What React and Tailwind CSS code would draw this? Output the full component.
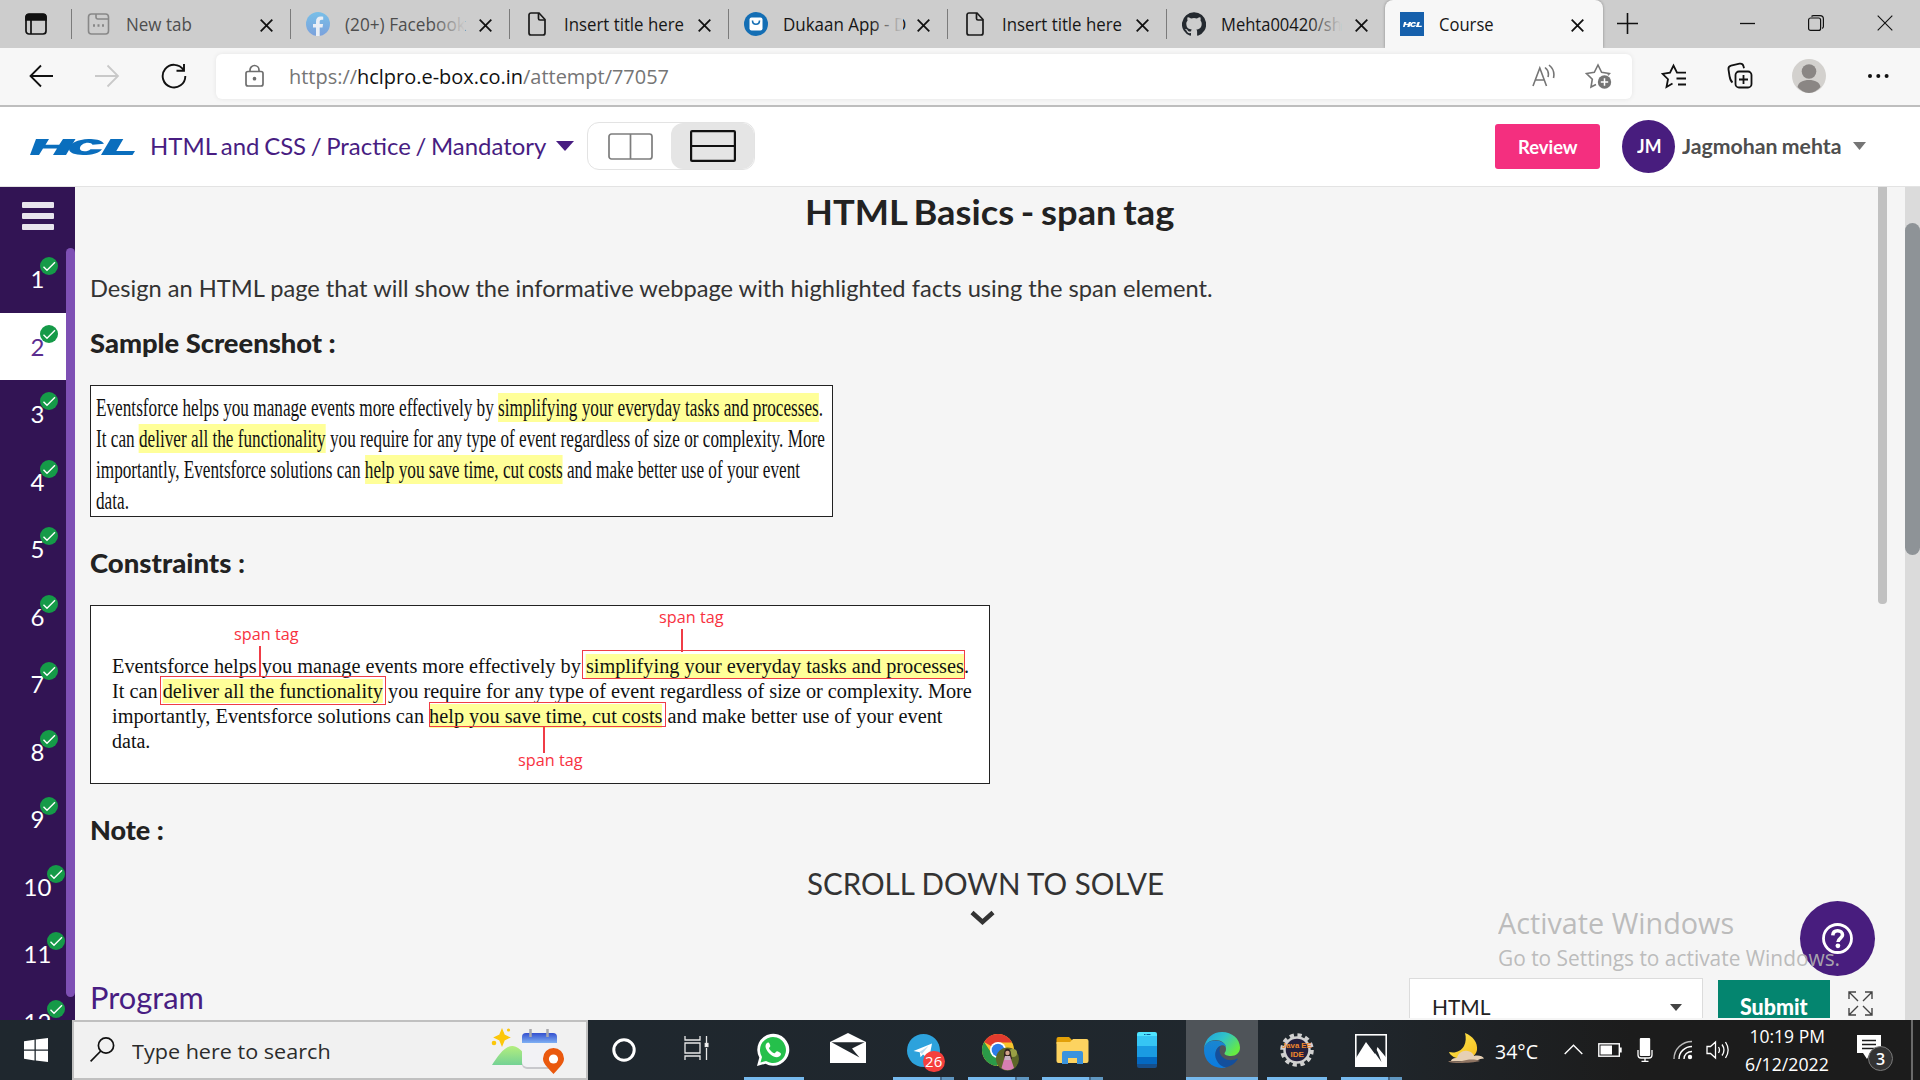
import { useLayoutEffect, useRef } from "react";

/* Single line of text squeezed or stretched to a given advance width. */
function Fit({ w, className = "", children }) {
  const ref = useRef(null);
  useLayoutEffect(() => {
    const el = ref.current;
    el.style.transform = `scaleX(${w / el.offsetWidth})`;
  }, [w]);
  return (
    <span className={`block shrink-0 whitespace-nowrap ${className}`} style={{ width: w }}>
      <span ref={ref} className="inline-block origin-left whitespace-pre">
        {children}
      </span>
    </span>
  );
}

const Svg = ({ w, h, className = "", children, ...rest }) => (
  <svg width={w} height={h} viewBox={`0 0 ${w} ${h}`} fill="none" className={`shrink-0 ${className}`} {...rest}>
    {children}
  </svg>
);

/* ---------- browser chrome ---------- */

const Cross = ({ s = 13, width = 1.8 }) => (
  <Svg w={s} h={s} stroke="#111" strokeWidth={width}>
    <path d={`M.7 .7 L${s - 0.7} ${s - 0.7} M${s - 0.7} .7 L.7 ${s - 0.7}`} />
  </Svg>
);

const PageIcon = () => (
  <Svg w={24} h={24} stroke="#1a1a1a" strokeWidth="1.7">
    <path d="M6 1h8l6 6.5V21a2 2 0 0 1-2 2H6a2 2 0 0 1-2-2V3a2 2 0 0 1 2-2Z" />
    <path d="M13.5 1v5.5a1.5 1.5 0 0 0 1.5 1.5h5" />
  </Svg>
);
const NewTabIcon = () => (
  <Svg w={24} h={24} stroke="#888" strokeWidth="1.6">
    <rect x="1.5" y="2" width="20" height="20" rx="3" />
    <path d="M9 2v3a2 2 0 0 0 2 2h10" />
    <path d="M6 13.5h2M10.500 13.500h2M15 13.500h2" strokeWidth="2.4" />
  </Svg>
);
const FacebookIcon = () => (
  <Svg w={24} h={24}>
    <defs>
      <linearGradient id="fb" x1="0" y1="0" x2="0" y2="1">
        <stop offset="0" stopColor="#78bfe8" />
        <stop offset="1" stopColor="#7ba1dc" />
      </linearGradient>
    </defs>
    <circle cx="12" cy="12" r="12" fill="url(#fb)" />
    <path d="M10 24v-8.500H7V12h3V9.400C10 6.300 11.800 4.600 14.600 4.600c1.300 0 2.600.2 2.600.2v3h-1.500c-1.500 0-2 .9-2 1.900V12h3.400l-.6 3.500h-2.800V24Z" fill="#e9eef5" />
  </Svg>
);
const DukaanIcon = () => (
  <Svg w={24} h={24}>
    <circle cx="12" cy="12" r="12" fill="#146eb4" />
    <rect x="5.500" y="5.500" width="13" height="13" rx="2" fill="#fff" />
    <path d="M8.500 8.500c0 5 7 5 7 0" stroke="#146eb4" strokeWidth="1.600" />
  </Svg>
);
const GithubIcon = () => (
  <Svg w={24} h={24}>
    <path
      fill="#24292f"
      d="M12 .3a12 12 0 0 0-3.800 23.400c.6.1.8-.3.8-.6v-2c-3.300.7-4-1.600-4-1.600-.6-1.400-1.400-1.800-1.400-1.800-1-.7.1-.7.1-.7 1.200 0 1.900 1.200 1.900 1.200 1 1.800 2.800 1.300 3.500 1 0-.8.4-1.300.7-1.600-2.700-.3-5.500-1.300-5.500-6 0-1.200.5-2.300 1.300-3.100-.2-.4-.6-1.600 0-3.200 0 0 1-.3 3.400 1.200a11.500 11.500 0 0 1 6 0c2.300-1.500 3.300-1.200 3.300-1.200.7 1.600.3 2.800.2 3.200.8.8 1.200 1.900 1.200 3.200 0 4.600-2.800 5.600-5.500 5.900.5.400.9 1 .9 2.200v3.300c0 .3.1.7.8.6A12 12 0 0 0 12 .3"
    />
  </Svg>
);
const HclMark = ({ w, h, fill }) => (
  <svg width={w} height={h} viewBox="0 0 105 16" preserveAspectRatio="none" className="shrink-0" fill={fill}>
    <path d="M6 0h13l-3.500 5.800h13.700L33 0h12.500L36 16H23l4-6.500H13L9 16H0Z" />
    <path d="M74 4.800c-2-3.400-8-5-15.500-4.800C48 .3 39 4.500 39 9.800c0 4.200 6 6.200 14 6.200 9.500 0 16.500-2.200 19-5.800H60.500c-1.500 1.500-3.500 2-6 2-3.500 0-5-1.300-4.500-3.400.6-2.700 4-5 8-5 2.500 0 4 .7 4.500 2Z" />
    <path d="M80.500 0h12.800l-7 12H105l-2.500 4H71Z" />
  </svg>
);
const HclFavicon = () => (
  <span className="flex h-6 w-6 items-center justify-center bg-[#1660ac]">
    <HclMark w={19} h={5} fill="#fff" />
  </span>
);

const TABS = [
  { icon: <NewTabIcon />, label: "New tab", w: 66, dim: true },
  { icon: <FacebookIcon />, label: "(20+) Facebook", w: 121, dim: true, fade: true },
  { icon: <PageIcon />, label: "Insert title here", w: 120 },
  { icon: <DukaanIcon />, label: "Dukaan App - D", w: 123, fade: true },
  { icon: <PageIcon />, label: "Insert title here", w: 120 },
  { icon: <GithubIcon />, label: "Mehta00420/sh", w: 121, fade: true },
];

function TabBar() {
  return (
    <div className="flex h-12 w-full bg-[#cdcdcd]">
      <div className="flex w-[71px] shrink-0 items-center pl-[25px]">
        <Svg w={22} h={22} stroke="#111" strokeWidth="1.700">
          <rect x="1" y="1.500" width="20" height="19.500" rx="3" />
          <path d="M1 4a3 3 0 0 1 3-3h14a3 3 0 0 1 3 3v3H1Z" fill="#111" />
          <path d="M6 7v14" />
        </Svg>
      </div>
      {TABS.map((t, i) => (
        <div key={i} className="relative flex w-[219px] shrink-0 items-center">
          <div className="h-[30px] w-px bg-[#7b7b7b]" />
          <div className="ml-[15px] w-6 shrink-0">{t.icon}</div>
          <div className="ml-[15px] w-[124px]">
            <Fit w={t.w} className={`text-[17.500px] leading-[46px] ${t.dim ? "text-[#4d4d4d]" : "text-[#161616]"}`}>
              {t.label}
            </Fit>
          </div>
          {t.fade && <div className="absolute left-[142px] h-8 w-[33px] bg-gradient-to-r from-[#cdcdcd]/0 to-[#cdcdcd]" />}
          <div className="ml-[10px] pt-[2px]">
            <Cross />
          </div>
        </div>
      ))}
      <div className="flex w-[218px] shrink-0 items-center rounded-t-lg bg-[#f7f7f7] pl-[15px] shadow-[0_0_3px_rgba(0,0,0,0.35)] [clip-path:inset(0_-4px_0_-4px)]">
        <HclFavicon />
        <div className="ml-[15px] w-[130px]">
          <Fit w={55} className="text-[17.500px] leading-[46px] text-[#161616]">Course</Fit>
        </div>
        <div className="ml-[2px] pt-[2px]">
          <Cross />
        </div>
      </div>
      <div className="flex flex-1 items-center pl-[14px]">
        <Svg w={21} h={21} stroke="#111" strokeWidth="1.600" className="-mt-0.5">
          <path d="M10.500 0v21M0 10.500h21" />
        </Svg>
        <Svg w={15} h={16} stroke="#111" strokeWidth="1.300" className="-mt-0.5 ml-[102px]">
          <path d="M0 8.500h15" />
        </Svg>
        <Svg w={16} h={16} stroke="#111" strokeWidth="1.200" className="-mt-0.5 ml-[53px]">
          <rect x=".6" y="3" width="12" height="12.400" rx="2" />
          <path d="M3.500 1.500c.5-.6 1-.9 2-.9H12a3.400 3.400 0 0 1 3.400 3.400v7.500c0 .9-.4 1.300-1.200 1.900" />
        </Svg>
        <div className="-mt-0.5 ml-[53px]">
          <Cross s={16} width={1.1} />
        </div>
      </div>
    </div>
  );
}

function Toolbar() {
  return (
    <div className="flex h-[59px] w-full items-center border-b-2 border-[#bebebe] bg-[#f7f7f7] pb-px">
      <Svg w={25} h={24} stroke="#111" strokeWidth="1.800" className="ml-[29px]">
        <path d="M24 12H1.500M12 1.500 1.500 12 12 22.500" />
      </Svg>
      <Svg w={25} h={24} stroke="#c9c9c9" strokeWidth="1.800" className="ml-[41px]">
        <path d="M0 12h23M12.500 1.500 23 12 12.500 22.500" />
      </Svg>
      <Svg w={26} h={26} stroke="#111" strokeWidth="1.900" className="ml-[41px]">
        <path d="M22.500 7A11.300 11.300 0 1 0 24.300 13" />
        <path d="M23 1v6.800h-7.500" />
      </Svg>
      <div className="ml-[29px] flex h-[45px] w-[1416px] shrink-0 items-center rounded-md bg-white shadow-[0_0_5px_rgba(0,0,0,0.08)]">
        <Svg w={19} h={24} stroke="#6e6e6e" strokeWidth="1.700" className="ml-[29px]">
          <rect x="1" y="7.500" width="17" height="14.500" rx="2" />
          <path d="M5 7.500V6a4.500 4.500 0 0 1 9 0v1.500" />
          <circle cx="9.500" cy="14.700" r="1" fill="#6e6e6e" />
        </Svg>
        <Fit w={380} className="ml-[25px] text-[20px] leading-[45px] text-[#757575]">
          https://<span className="text-[#111]">hclpro.e-box.co.in</span>/attempt/77057
        </Fit>
        <Svg w={24} h={24} stroke="#757575" strokeWidth="1.600" className="ml-[863px]">
          <path d="M1 22 7.800 4 14.500 22M3.500 16h8.500" />
          <path d="M13 3.500a9 9 0 0 1 3 9.500M17 1a13 13 0 0 1 4.500 13" />
        </Svg>
        <Svg w={28} h={28} stroke="#757575" strokeWidth="1.600" className="ml-[29px]">
          <path d="M11 22.500 6 25l1.300-7.800L1.500 11.500l7.800-1.200L13 3l3.600 7.300 7.800 1.200-1.500 1.700" />
          <circle cx="19.500" cy="20" r="6.700" fill="#757575" stroke="none" />
          <path d="M19.500 16.300v7.400M15.800 20h7.400" stroke="#fff" strokeWidth="1.500" />
        </Svg>
      </div>
      <Svg w={26} h={26} stroke="#111" strokeWidth="1.800" className="ml-[29px]">
        <path d="M11.500 20.500 5.500 24 7 16.200 1.500 10.800l7.500-1.200L12.500 2.500 16 9.600h9M15.500 15.500h9.500M17 21.500h8" />
      </Svg>
      <Svg w={27} h={28} stroke="#111" strokeWidth="1.800" className="ml-[40px]">
        <rect x="8.500" y="9.500" width="16" height="16" rx="3.500" />
        <path d="M16.500 13v9M12 17.500h9" />
        <path d="M5.500 20.500C3.500 19 3 17 2.500 14L1.500 7.500c-.3-2 .6-3.300 2.500-3.800l8.500-2c2-.4 3.500.6 4 2.500l.5 2" />
      </Svg>
      <Svg w={34} h={34} className="ml-[38px]">
        <circle cx="17" cy="17" r="17" fill="#d3d1ce" />
        <circle cx="17" cy="12.500" r="7.300" fill="#8a8684" />
        <path d="M5.500 28c1-5 5.500-7 11.500-7s10.500 2 11.500 7A17 17 0 0 1 17 34a17 17 0 0 1-11.500-6Z" fill="#8a8684" />
      </Svg>
      <Svg w={21} h={4} fill="#111" className="ml-[42px]">
        <circle cx="2" cy="2" r="2" fill="#111" />
        <circle cx="10.300" cy="2" r="2" fill="#111" />
        <circle cx="18.600" cy="2" r="2" fill="#111" />
      </Svg>
    </div>
  );
}

/* ---------- course page ---------- */

function Header() {
  return (
    <div className="flex h-20 w-full items-center border-b border-[#e3e3e3] bg-white pb-px font-['Lato',sans-serif]">
      <div className="ml-[30px] mt-0.5">
        <HclMark w={105} h={16} fill="#0a6ebd" />
      </div>
      <Fit w={396} className="ml-[15px] text-[24px] leading-[78px] text-[#481d82] [word-spacing:-1.500px]">
        HTML and CSS / Practice / Mandatory
      </Fit>
      <Svg w={18} h={10} className="ml-[10px]">
        <path d="M0 0h18L9 10Z" fill="#481d82" />
      </Svg>
      <div className="ml-[13px] flex h-12 w-[168px] items-center rounded-xl border border-[#e3e3e3]">
        <Svg w={45} h={27} stroke="#7d7d7d" strokeWidth="1.700" className="ml-[20px]">
          <rect x="1" y="1" width="43" height="25" rx="2.500" />
          <path d="M22.500 1v25" />
        </Svg>
        <div className="ml-[18px] flex h-[46px] w-[83px] items-center justify-center rounded-xl bg-[#e5e5e5]">
          <Svg w={46} h={32} stroke="#111" strokeWidth="2.200">
            <rect x="1.100" y="1.100" width="43.800" height="29.800" rx="1" />
            <path d="M1 16h44" />
          </Svg>
        </div>
      </div>
      <div className="ml-[740px] flex h-[45px] w-[105px] items-center justify-center rounded-[3px] bg-[#f42f7f]">
        <Fit w={60} className="text-[19px] font-bold leading-[45px] text-white">Review</Fit>
      </div>
      <div className="ml-[22px] flex h-[53px] w-[53px] items-center justify-center rounded-full bg-[#481d7e]">
        <Fit w={24} className="text-[18.500px] font-bold leading-[45px] text-white">JM</Fit>
      </div>
      <Fit w={159} className="ml-[7px] text-[21px] font-bold leading-[78px] text-[#4e4e4e] [word-spacing:-1px]">
        Jagmohan mehta
      </Fit>
      <Svg w={13} h={8} className="ml-[12px]">
        <path d="M0 0h13L6.500 8Z" fill="#757575" />
      </Svg>
    </div>
  );
}

function Sidebar() {
  return (
    <div className="flex w-[75px] shrink-0 flex-col bg-[#321454] font-['Lato',sans-serif]">
      <div className="flex h-[58px] shrink-0 flex-col gap-[5px] pl-[22px] pt-[15px]">
        <div className="h-[6px] w-8 shrink-0 rounded-[1px] bg-[#e8e4ed]" />
        <div className="h-[6px] w-8 shrink-0 rounded-[1px] bg-[#e8e4ed]" />
        <div className="h-[6px] w-8 shrink-0 rounded-[1px] bg-[#e8e4ed]" />
      </div>
      <div className="flex min-h-0 flex-1">
        <div className="w-[66px] overflow-hidden">
          {[1, 2, 3, 4, 5, 6, 7, 8, 9, 10, 11, 12].map((n) => (
            <div
              key={n}
              className={`relative h-[67.550px] pl-[9px] pt-[20px] text-center text-[24px] leading-[28px] ${
                n === 2 ? "bg-white text-[#5b2d90]" : "text-white"
              }`}
            >
              {n}
              <Svg w={18} h={18} className={`absolute top-[12px] ${n > 9 ? "left-[47px]" : "left-[40px]"}`}>
                <circle cx="9" cy="9" r="9" fill="#159a48" />
                <path d="m3.500 9.700 3.500 3.500 8-8" stroke="#fff" strokeWidth="1.400" />
              </Svg>
            </div>
          ))}
        </div>
        <div className="mt-[3px] h-[749px] w-[9px] rounded-full bg-[#7e50b4]" />
      </div>
    </div>
  );
}

const Mark = ({ children }) => <span className="bg-[#ffff99] py-px">{children}</span>;

const Sample = ({ widths }) => (
  <>
    <Fit w={widths[0]}>
      Eventsforce helps you manage events more effectively by <Mark>simplifying your everyday tasks and processes</Mark>.
    </Fit>
    <Fit w={widths[1]}>
      It can <Mark>deliver all the functionality</Mark> you require for any type of event regardless of size or complexity. More
    </Fit>
    <Fit w={widths[2]}>
      importantly, Eventsforce solutions can <Mark>help you save time, cut costs</Mark> and make better use of your event
    </Fit>
    <Fit w={widths[3]}>data.</Fit>
  </>
);

const SpanTag = ({ className }) => (
  <div className={`absolute ${className}`}>
    <Fit w={65} className="font-['Open_Sans',sans-serif] text-[17px] leading-[22px] text-[#f8323f]">span tag</Fit>
  </div>
);

function Content() {
  return (
    <div className="flex min-w-0 flex-1 justify-between bg-[#f5f5f5] font-['Lato',sans-serif] text-[#222] [font-variant-ligatures:none]">
      <div className="flex w-[1800px] flex-col items-start pl-[15px]">
        <div className="mt-[2px] flex w-full pl-[715px]">
          <Fit w={369} className="text-[35px] font-bold leading-[44px] [word-spacing:-2px]">HTML Basics - span tag</Fit>
        </div>
        <Fit w={1123} className="mt-[39px] text-[24px] leading-[32px] text-[#333]">
          Design an HTML page that will show the informative webpage with highlighted facts using the span element.
        </Fit>
        <Fit w={246} className="mt-[21px] text-[27px] font-black leading-[36px]">Sample Screenshot :</Fit>
        <div className="mt-[24px] h-[132px] w-[743px] border border-[#222] bg-white pl-[5px] pt-[6px] font-['Liberation_Serif',serif] text-[25px] leading-[31px] text-[#111]">
          <Sample widths={[727, 729, 704, 33]} />
        </div>
        <Fit w={155} className="mt-[28px] text-[27px] font-black leading-[36px]">
          Constraints <span className="font-bold">:</span>
        </Fit>
        <div className="relative mt-[24px] h-[179px] w-[900px] border border-[#222] bg-white pl-[21px] pt-[48px] font-['Liberation_Serif',serif] text-[20px] leading-[25px] text-[#111]">
          <Sample widths={[857, 860, 831, 38]} />
          <SpanTag className="left-[143px] top-[17px]" />
          <SpanTag className="left-[568px] top-0" />
          <SpanTag className="left-[427px] top-[143px]" />
          <div className="absolute left-[168px] top-[40px] h-[31px] w-[1.500px] bg-[#f03c46]" />
          <div className="absolute left-[590px] top-[23px] h-[23px] w-[1.500px] bg-[#f03c46]" />
          <div className="absolute left-[452px] top-[121px] h-[26px] w-[1.500px] bg-[#f03c46]" />
          <div className="absolute left-[491px] top-[44px] h-[29px] w-[383px] border-[1.500px] border-[#f03c46]" />
          <div className="absolute left-[69px] top-[70px] h-[29px] w-[226px] border-[1.500px] border-[#f03c46]" />
          <div className="absolute left-[338px] top-[96px] h-[25px] w-[237px] border-[1.500px] border-[#f03c46]" />
        </div>
        <Fit w={74} className="mt-[28px] text-[27px] font-black leading-[36px]">Note :</Fit>
        <div className="mt-[15px] flex w-full flex-col pl-[717px]">
          <Fit w={357} className="text-[30px] leading-[40px] text-[#333]">SCROLL DOWN TO SOLVE</Fit>
          <Svg w={25} h={15} stroke="#333" strokeWidth="4.500" className="ml-[163px] mt-[7px]">
            <path d="M2 2.500 12.500 12 23 2.500" />
          </Svg>
        </div>
        <div className="mt-[52px] flex h-[41px] w-full overflow-hidden">
          <Fit w={114} className="text-[30px] leading-[40px] text-[#481d82]">Program</Fit>
          <div className="ml-[1205px] mt-px flex h-[60px] w-[294px] shrink-0 border border-[#dcdcdc] bg-white pl-[22px]">
            <Fit w={59} className="pt-[12px] text-[22px] leading-[32px]">HTML</Fit>
            <Svg w={12} h={7} className="ml-[179px] mt-[25px]">
              <path d="M0 0h12L6 7Z" fill="#444" />
            </Svg>
          </div>
          <div className="ml-[15px] mt-[3px] h-[60px] w-[112px] shrink-0 bg-[#04856f] pl-[22px]">
            <Fit w={68} className="pt-[11px] text-[22px] font-black leading-[32px] text-white">Submit</Fit>
          </div>
          <Svg w={25} h={25} stroke="#444" strokeWidth="1.400" className="ml-[18px] mt-[14px]">
            <path d="M10 10 1 1M1 8V1h7M15 10l9-9M17 1h7v7M10 15l-9 9M1 17v7h7M15 15l9 9M24 17v7h-7" />
          </Svg>
        </div>
      </div>
      <div className="flex w-[42px] shrink-0 justify-between">
        <div className="h-[417px] w-[9px] rounded-b bg-[#c1c1c1]" />
        <div className="w-[15px] bg-[#dbdbdb] pt-[36px]">
          <div className="h-[332px] rounded-full bg-[#8e9397]" />
        </div>
      </div>
    </div>
  );
}

/* ---------- taskbar ---------- */

function Whatsapp() {
  return (
    <Svg w={34} h={34} className="mr-[2px]">
      <path d="M1 33 3.300 24.500A16 16 0 1 1 9.500 30.700Z" fill="#fff" />
      <path d="M4.500 29.500 6 24A13 13 0 1 1 10 28Z" fill="#25c04b" />
      <path d="M12.500 9.500c-1-.3-3 1-3 3.700 0 4.500 6.500 11 11.500 11 2.500 0 4-1.700 4-3.400 0-.8-3.500-2.600-4.200-2.500-.8.200-1.600 2-2.300 2-1.500 0-5.500-3.800-5.500-5 0-.7 1.300-1.300 1.300-2.200 0-.8-1-3.400-1.800-3.600Z" fill="#fff" />
    </Svg>
  );
}
const Mail = () => (
  <Svg w={36} h={30} className="-mt-1">
    <path d="M18 0 36 9v21H0V9Z" fill="#fff" />
    <path d="M1.500 9.300h33L22 15.500l7.500 9L1.500 9.300Z" fill="#20272d" />
  </Svg>
);
const Telegram = () => (
  <div className="relative">
    <Svg w={33} h={33}>
      <circle cx="16.500" cy="16.500" r="16.500" fill="#2da2dc" />
      <path d="M6.500 17 25 9.500l-3 15.500-6-4.500-2.500 2.800-.7-5Z" fill="#fff" />
      <path d="m12.500 18 9-6-6.500 8Z" fill="#bcdcf0" />
    </Svg>
    <div className="absolute left-[16px] top-[17px] flex h-[21px] w-[22px] items-center justify-center rounded-full bg-[#f53f3c]">
      <Fit w={17} className="text-[15px] leading-[20px] text-white">26</Fit>
    </div>
  </div>
);
const Chrome = () => (
  <Svg w={38} h={38}>
    <circle cx="17" cy="17" r="16" fill="#f7c52d" />
    <path d="M17 17 3.100 9A16 16 0 0 1 31 9.500H17Z" fill="#e23b2e" />
    <path d="M3.100 9A16 16 0 0 0 16 33l7-12H11Z" fill="#2b9a48" />
    <circle cx="17" cy="17" r="8" fill="#fff" />
    <circle cx="17" cy="17" r="6.300" fill="#2d7de9" />
    <circle cx="26.500" cy="26" r="11.500" fill="#5d6628" />
    <circle cx="32" cy="20" r="4" fill="#9aa045" />
    <path d="M25 16c3-1 5 1 5 5l1 5h-8c0-4-.5-8 2-10Z" fill="#33251f" />
    <circle cx="26.500" cy="20" r="2.200" fill="#d3a48c" />
    <path d="M24 23h5l4 12c-4 3-9 3-12.500 0Z" fill="#d77fb0" />
    <path d="M24 23h5l.5 4h-6Z" fill="#c9b3c4" />
  </Svg>
);
const Explorer = () => (
  <Svg w={33} h={27}>
    <path d="M.5 2a2 2 0 0 1 2-2H13l3 3v4H.5Z" fill="#e2a008" />
    <path d="M.5 5H14l3-3h13.500a2 2 0 0 1 2 2v20a2 2 0 0 1-2 2h-28a2 2 0 0 1-2-2Z" fill="#fdd360" />
    <path d="M6 27V16a2 2 0 0 1 2-2h17a2 2 0 0 1 2 2v11h-6v-6h-9v6Z" fill="#3b93dc" />
  </Svg>
);
const Phone = () => (
  <Svg w={20} h={36}>
    <path d="M0 2a2 2 0 0 1 2-2h16a2 2 0 0 1 2 2v4H0Z" fill="#4fe4ff" />
    <path d="M0 4h20v10H0Z" fill="#36c5f4" />
    <path d="M0 14h20v11H0Z" fill="#1a9be2" />
    <path d="M0 25h20v7H0Z" fill="#0468c0" />
    <path d="M0 32h20v2a2 2 0 0 1-2 2H2a2 2 0 0 1-2-2Z" fill="#164f8c" />
    <path d="M7 2.500h1.500M9.500 2.500h4" stroke="#0c5a9a" />
  </Svg>
);
const Edge = () => (
  <Svg w={36} h={36}>
    <defs>
      <linearGradient id="e1" x1="0" y1="0" x2="1" y2=".6">
        <stop offset="0" stopColor="#1f9fe0" />
        <stop offset=".5" stopColor="#30c3c9" />
        <stop offset="1" stopColor="#66ea42" />
      </linearGradient>
      <linearGradient id="e2" x1="0" y1="0" x2="0" y2="1">
        <stop offset="0" stopColor="#1a86d0" />
        <stop offset="1" stopColor="#0a7be0" />
      </linearGradient>
    </defs>
    <path d="M0 17C1 6 9 0 18 0c10 0 18 7 18 15.500 0 5.500-4 8.500-9 8.500-4 0-6.500-1.300-6.500-2.500 0-1 1.500-1.500 1.500-4.500C22 11 17 8 11.500 8 5.500 8 1 12 0 17Z" fill="url(#e1)" />
    <path d="M0 18C0 12 5 8.500 11 8.500c6 0 11 3 11 6.500-1.500-1.500-3-2-5-1.500-3.500 1-6 5-5 10C13 29 17 33 22 35.500 10 38 0 29.500 0 18Z" fill="url(#e2)" />
    <path d="M17 13.700C12 16 9.500 22 12.500 28c2 4.500 5.500 7 10 7.300C27 34 31 31.500 33.500 27.500c.3-.8-.3-1.100-1-.7-8 4-17-1-17-8.500 0-2 .5-3.500 1.500-4.600Z" fill="#144f9c" />
  </Svg>
);
const JavaEE = () => (
  <div className="relative flex h-[34px] w-[34px] items-center justify-center">
    <Svg w={34} h={34}>
      <circle cx="17" cy="17" r="14.800" stroke="#d0d0d0" strokeWidth="4" strokeDasharray="4.200 3.550" />
      <circle cx="17" cy="17" r="12.500" fill="#25203c" stroke="#d0d0d0" strokeWidth="2.500" />
    </Svg>
    <div className="absolute left-[2px] top-[8px] font-['Liberation_Sans',sans-serif] text-[8px] font-bold leading-[9px] text-[#f0882c]">
      <Fit w={30} className="h-[9px]">Java EE</Fit>
      <Fit w={13} className="ml-[9px] h-[9px]">IDE</Fit>
    </div>
  </div>
);
const Photos = () => (
  <Svg w={32} h={33}>
    <rect x=".8" y=".8" width="30.400" height="31.400" stroke="#fff" strokeWidth="1.600" />
    <path d="M1 24 11 8l9 12 2.500-7 9 11v8H1Z" fill="#fff" />
    <path d="m18.500 17 8 11-3.500-9.500L21 14.500Z" fill="#20272d" />
  </Svg>
);
const TaskView = () => (
  <Svg w={25} h={24} stroke="#e8e8e8" strokeWidth="1.300" className="mr-[6px] -mt-1">
    <path d="M1 0v4h15V0M1 24v-4h15v4M1 7h15v10H1ZM22.500 0v7M22.500 12v12" />
    <rect x="21.300" y="7.500" width="2.600" height="3" fill="#fff" />
  </Svg>
);

const APPS = [
  { icon: <Svg w={24} h={24}><circle cx="12" cy="12" r="10.200" stroke="#fff" strokeWidth="3" /></Svg> },
  { icon: <TaskView /> },
  { icon: <Whatsapp />, bar: "full" },
  { icon: <Mail /> },
  { icon: <Telegram />, bar: "multi" },
  { icon: <div className="-mr-1 mt-1"><Chrome /></div>, bar: "multi" },
  { icon: <Explorer />, bar: "multi" },
  { icon: <Phone /> },
  { icon: <Edge />, active: true },
  { icon: <JavaEE />, bar: "full" },
  { icon: <Photos />, bar: "multi" },
];

function Taskbar() {
  return (
    <div className="flex h-[60px] w-full shrink-0 bg-gradient-to-r from-[#1f272e] from-30% via-[#20272d] via-70% to-[#1c1c1c] to-85% text-white">
      <div className="flex w-[72px] shrink-0 items-center pl-6">
        <Svg w={24} h={24} fill="#fff">
          <path d="M0 3.300 10.500 1.700v9.700H0ZM11.800 1.500 24 0v11.400H11.800ZM0 12.700h10.500v9.700L0 20.800ZM11.800 12.700H24V24l-12.200-1.600Z" fill="#fff" />
        </Svg>
      </div>
      <div className="flex w-[516px] shrink-0 items-center border-2 border-[#c0c0c0] bg-[#f1f1f1] pl-4">
        <Svg w={25} h={25} stroke="#111" strokeWidth="1.700" className="-mt-0.5">
          <circle cx="16" cy="8.500" r="7.600" />
          <path d="M10.800 14 .6 24.300" />
        </Svg>
        <Fit w={199} className="ml-[17px] pt-0.5 text-[20.500px] leading-[52px] text-[#2b2b2b]">Type here to search</Fit>
        <Svg w={76} h={48} className="ml-[159px]">
          <defs>
            <linearGradient id="hill" x1="0" y1="0" x2="0" y2="1">
              <stop offset="0" stopColor="#b4ee7d" />
              <stop offset="1" stopColor="#74d295" />
            </linearGradient>
            <linearGradient id="cal" x1="0" y1="0" x2="0" y2="1">
              <stop offset="0" stopColor="#3450cf" />
              <stop offset="1" stopColor="#7fb0f3" />
            </linearGradient>
          </defs>
          <path d="m12 4 2.200 5.300L19 11.500l-4.800 2.200L12 19l-2.200-5.300L5 11.500l4.800-2.200Z" fill="#fcc70a" stroke="#fcc70a" strokeWidth="1.500" />
          <circle cx="18.500" cy="4" r="1.600" fill="#fcc70a" />
          <circle cx="4" cy="17" r="2.300" fill="#fcc70a" />
          <path d="M2 39c5-8 13-20 21-19 8 1 13 11 20 19Z" fill="url(#hill)" />
          <rect x="32" y="8" width="35" height="35" rx="5" fill="#c8c8cc" />
          <rect x="32" y="7" width="35" height="34" rx="5" fill="#f2f2f5" />
          <path d="M32 17v-6a4 4 0 0 1 4-4h27a4 4 0 0 1 4 4v6Z" fill="url(#cal)" />
          <path d="M40.500 3v8M57.500 3v8" stroke="#a8a8ac" strokeWidth="2.500" />
          <path d="M63.500 48C56 40 53 37 53 32.500a10.500 10.500 0 0 1 21 0c0 4.500-3 7.500-10.500 15.500Z" fill="#ea590e" />
          <circle cx="63.500" cy="33" r="4.600" fill="#fff" />
        </Svg>
      </div>
      <div className="-ml-px flex w-[833px] shrink-0">
        {APPS.map((a, i) => (
          <div key={i} className="flex w-[74.700px] shrink-0 justify-center">
            <div className={`relative flex h-[60px] w-[72px] shrink-0 items-center justify-center ${a.active ? "bg-[#4f5459]" : ""}`}>
              {a.icon}
              {a.bar === "full" && <div className="absolute bottom-0 left-[6px] h-[3px] w-[60px] bg-[#76b9ed]" />}
              {a.active && <div className="absolute bottom-0 left-0 h-[3px] w-full bg-[#76b9ed]" />}
              {a.bar === "multi" && (
                <div className="absolute bottom-0 left-[6px] flex h-[3px] w-[61px]">
                  <div className="w-[47px] bg-[#76b9ed]" />
                  <div className="w-[2px] bg-[#45698a]" />
                  <div className="w-[12px] bg-[#5f96c0]" />
                </div>
              )}
            </div>
          </div>
        ))}
      </div>
      <div className="flex flex-1 items-center">
        <Svg w={36} h={32} className="-mt-1 ml-[28px]">
          <defs>
            <linearGradient id="moon" x1="0" y1="0" x2="1" y2="1">
              <stop offset="0" stopColor="#ffee55" />
              <stop offset="1" stopColor="#f5ba1c" />
            </linearGradient>
          </defs>
          <path d="M17 1c8 3 13 10 12 17-1.500 7-8 10-15 9C7 26.500 2 23.500 1 20c6 1.500 12-.5 15-6 2-4 2.200-8.500 1-13Z" fill="url(#moon)" />
          <path d="M3 29c0-2 3-3.500 6-3 1-5 6-8 10.500-7 4 .5 6 3 6.500 5 4-1 9 0 10 2.500-6 0-6 3-12 3.300Z" fill="#e6d0b4" />
          <path d="M0 29.500c4-1.500 9 1 14-.5s12-2.500 18 0c-8 2-27 3-32 .5Z" fill="#8e7462" />
        </Svg>
        <Fit w={43} className="ml-[11px] pt-1 text-[20px] leading-[56px]">34°C</Fit>
        <Svg w={19} h={11} stroke="#fff" strokeWidth="1.400" className="-mt-[22px] ml-[26px] translate-y-[10px]">
          <path d="m.7 10 8.800-8.700L18.300 10" />
        </Svg>
        <Svg w={24} h={14} className="ml-[15px]">
          <rect x=".8" y=".8" width="20.500" height="12.400" stroke="#fff" strokeWidth="1.400" />
          <path d="M2.500 2.500H14v9H2.500ZM22 4.500h1.700v5H22Z" fill="#fff" />
        </Svg>
        <Svg w={16} h={24} className="ml-[15px]">
          <rect x="2.800" y="0" width="10.400" height="18" rx="1" fill="#fff" />
          <path d="M1 12v5a3 3 0 0 0 3 3h8a3 3 0 0 0 3-3v-5M8 20v3M4.500 23.300h7" stroke="#fff" strokeWidth="1.300" />
        </Svg>
        <Svg w={20} h={20} stroke="#bbb" strokeWidth="1.400" className="ml-[20px]">
          <path d="M1 19C1 9 9 1.500 19 1.500" />
          <path d="M6 19C6 12 12 6.500 19 6.500M11 19c0-4.500 3.500-7.500 8-7.500" stroke="#fff" />
          <circle cx="17" cy="17" r="2.200" fill="#fff" stroke="none" />
        </Svg>
        <Svg w={23} h={20} stroke="#fff" strokeWidth="1.300" className="ml-[13px]">
          <path d="M1 6.500h3.500L9.500 2v16l-5-4.500H1ZM12.500 7c1.300 2 1.300 4 0 6M16 4.500c2.500 3.500 2.500 7.500 0 11M19.500 2c3.300 5 3.300 11 0 16" />
        </Svg>
        <div className="ml-[16px] flex w-[84px] shrink-0 flex-col items-center text-[17.500px] leading-[28px]">
          <Fit w={75} className="h-7">10:19 PM</Fit>
          <Fit w={84} className="h-7">6/12/2022</Fit>
        </div>
        <div className="relative ml-[28px] -mt-1">
          <Svg w={24} h={26}>
            <path d="M0 0h24v18H13l-3 6-4-6H0Z" fill="#fff" />
            <path d="M5 5.500h14M5 9.500h14M5 13.500h14" stroke="#1c1c1c" strokeWidth="1.300" />
          </Svg>
          <div className="absolute left-[11px] top-[11px] flex h-[25px] w-[25px] items-center justify-center rounded-full border border-[#7a7a7a] bg-[#333]">
            <span className="text-[16px] font-semibold leading-[22px]">3</span>
          </div>
        </div>
        <div className="ml-[30px] h-[60px] w-[2px] bg-[#6a6a6a]" />
      </div>
    </div>
  );
}

export default function App() {
  return (
    <div className="relative flex h-[1080px] w-[1920px] flex-col overflow-hidden bg-[#f5f5f5] font-['Open_Sans',sans-serif]">
      <TabBar />
      <Toolbar />
      <Header />
      <div className="flex h-[833px] shrink-0 overflow-hidden">
        <Sidebar />
        <Content />
      </div>
      <Taskbar />
      <div className="absolute left-[1800px] top-[901px] flex h-[75px] w-[75px] items-center justify-center rounded-full bg-[#481d7e]">
        <Svg w={31} h={31} stroke="#fff" strokeWidth="2.800">
          <circle cx="15.500" cy="15.500" r="14" />
          <path d="M10.800 12.300c.2-3 2.200-4.500 4.800-4.500 2.700 0 4.900 1.600 4.900 4.200 0 3.300-4.500 3.500-4.500 7" strokeWidth="3.600" />
          <circle cx="15.900" cy="22.800" r="2.400" fill="#fff" stroke="none" />
        </Svg>
      </div>
      <div className="absolute left-[1498px] top-[901px] text-[#b4b4b4]/90">
        <Fit w={236} className="text-[29.500px] leading-[44px]">Activate Windows</Fit>
        <Fit w={342} className="text-[21px] leading-[26px]">Go to Settings to activate Windows.</Fit>
      </div>
    </div>
  );
}
